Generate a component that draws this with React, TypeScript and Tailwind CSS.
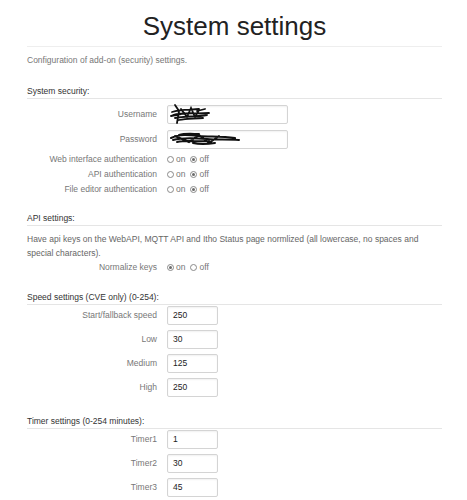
import React from "react";

function Radio({ checked }: { checked?: boolean }) {
  return (
    <span className="inline-flex items-center justify-center w-[7px] h-[7px] rounded-full border border-[#8a8a8a] bg-white">
      {checked && <span className="w-[3px] h-[3px] rounded-full bg-[#6b6b6b]" />}
    </span>
  );
}

function OnOff({ on }: { on?: boolean }) {
  return (
    <div className="flex items-center gap-[2px] text-[#777]">
      <Radio checked={on} />
      <span>on</span>
      <span className="w-[1px]" />
      <Radio checked={!on} />
      <span>off</span>
    </div>
  );
}

function Label({ children }: { children: React.ReactNode }) {
  return <div className="w-[130px] shrink-0 text-right text-[#777]">{children}</div>;
}

function RadioRow({ label, on, className }: { label: string; on?: boolean; className?: string }) {
  return (
    <div className={"flex items-center gap-[10px] h-[15px] " + (className ?? "")}>
      <Label>{label}</Label>
      <OnOff on={on} />
    </div>
  );
}

function NumRow({ label, value }: { label: string; value: string }) {
  return (
    <div className="flex items-center gap-[10px] h-[19px]">
      <Label>{label}</Label>
      <div className="w-[51px] h-[19px] border border-[#d4d4d4] rounded-[2px] shadow-[inset_0_1px_2px_rgba(0,0,0,0.06)] flex items-center pl-[5px] text-[#222]">
        {value}
      </div>
    </div>
  );
}

function Heading({ children, className }: { children: React.ReactNode; className?: string }) {
  return (
    <div className={"leading-[14px] text-[#333] border-b border-[#e5e5e5] " + (className ?? "")}>
      {children}
    </div>
  );
}

function Scribble({ wide }: { wide?: boolean }) {
  if (wide) {
    return (
      <svg width="72" height="18" viewBox="0 0 72 18" className="absolute left-[1px] top-[-1px]">
        <path
          d="M2 8 C10 4 20 5 30 6 C40 7 52 6 66 8 M4 10 C14 7 26 8 38 9 C48 10 58 9 70 10 M6 6 L20 12 L30 5 L40 13 L50 6 M8 12 C18 10 28 12 40 11 M24 13 C32 15 40 14 46 13 M10 5 C16 3 24 4 30 4"
          stroke="#111"
          strokeWidth="2"
          fill="none"
          strokeLinecap="round"
        />
      </svg>
    );
  }
  return (
    <svg width="46" height="24" viewBox="0 0 46 24" className="absolute left-[1px] top-[-3px]">
      <path
        d="M6 2 L10 8 L8 20 M3 9 C12 6 22 7 30 6 M4 12 C14 9 24 11 40 10 M6 15 C16 13 28 14 38 12 M12 6 L18 14 L22 5 L26 14 L30 7 M10 17 C18 15 26 16 34 15 M28 8 L36 6 M2 13 L12 11"
        stroke="#111"
        strokeWidth="1.8"
        fill="none"
        strokeLinecap="round"
      />
    </svg>
  );
}

function TextRow({ label, wide }: { label: string; wide?: boolean }) {
  return (
    <div className="flex items-center gap-[10px] h-[19px]">
      <Label>{label}</Label>
      <div className="relative w-[121px] h-[19px] border border-[#d4d4d4] rounded-[2px] shadow-[inset_0_1px_2px_rgba(0,0,0,0.06)]">
        <Scribble wide={wide} />
      </div>
    </div>
  );
}

export default function App() {
  return (
    <div className="w-[467px] h-[500px] bg-white overflow-hidden font-['Liberation_Sans',Arial,sans-serif] text-[8.5px]">
      <div className="mx-[27px] w-[415px]">
        <h1 className="pt-[13px] pb-[7px] text-center text-[26px] leading-[26px] text-[#222] border-b border-[#eeeeee]">
          System settings
        </h1>
        <p className="mt-[6px] leading-[14px] text-[#777]">Configuration of add-on (security) settings.</p>

        <Heading className="mt-[17px]">System security:</Heading>
        <div className="mt-[6px] flex flex-col gap-[6px]">
          <TextRow label="Username" />
          <TextRow label="Password" wide />
        </div>
        <RadioRow label="Web interface authentication" className="mt-[3px]" />
        <RadioRow label="API authentication" />
        <RadioRow label="File editor authentication" />

        <Heading className="mt-[14px]">API settings:</Heading>
        <p className="mt-[6px] leading-[14px] text-[#666]">
          Have api keys on the WebAPI, MQTT API and Itho Status page normlized (all lowercase, no spaces and special
          characters).
        </p>
        <RadioRow label="Normalize keys" on />

        <Heading className="mt-[15px]">Speed settings (CVE only) (0-254):</Heading>
        <div className="mt-[1px] flex flex-col gap-[5px]">
          <NumRow label="Start/fallback speed" value="250" />
          <NumRow label="Low" value="30" />
          <NumRow label="Medium" value="125" />
          <NumRow label="High" value="250" />
        </div>

        <Heading className="mt-[17px]">Timer settings (0-254 minutes):</Heading>
        <div className="mt-[1px] flex flex-col gap-[5px]">
          <NumRow label="Timer1" value="1" />
          <NumRow label="Timer2" value="30" />
          <NumRow label="Timer3" value="45" />
        </div>
      </div>
    </div>
  );
}
